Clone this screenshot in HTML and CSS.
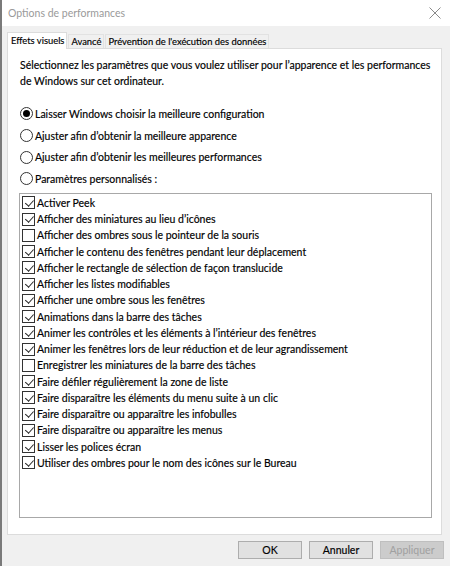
FILE: index.html
```html
<!DOCTYPE html>
<html lang="fr">
<head>
<meta charset="utf-8">
<title>Options de performances</title>
<link rel="stylesheet" href="styles.css">
</head>
<body>
<div class="window">
  <div class="titlebar">
    <span class="title">Options de performances</span>
    <svg class="close" width="12" height="12" viewBox="0 0 12 12"><path d="M0.5 0.5 L11.5 11.5 M11.5 0.5 L0.5 11.5" stroke="#8a8a8a" stroke-width="1" fill="none"/></svg>
  </div>
  <div class="tabs">
    <div class="tab active">Effets visuels</div>
    <div class="tab">Avancé</div>
    <div class="tab">Prévention de l'exécution des données</div>
  </div>
  <div class="panel">
    <p class="desc">Sélectionnez les paramètres que vous voulez utiliser pour l’apparence et les performances de Windows sur cet ordinateur.</p>
    <div class="radios">
      <div class="radio checked"><span class="dot"></span>Laisser Windows choisir la meilleure configuration</div>
      <div class="radio"><span class="dot"></span>Ajuster afin d’obtenir la meilleure apparence</div>
      <div class="radio"><span class="dot"></span>Ajuster afin d’obtenir les meilleures performances</div>
      <div class="radio"><span class="dot"></span>Paramètres personnalisés :</div>
    </div>
    <div class="list">
      <div class="item on"><span class="box"></span>Activer Peek</div>
      <div class="item on"><span class="box"></span>Afficher des miniatures au lieu d’icônes</div>
      <div class="item"><span class="box"></span>Afficher des ombres sous le pointeur de la souris</div>
      <div class="item on"><span class="box"></span>Afficher le contenu des fenêtres pendant leur déplacement</div>
      <div class="item on"><span class="box"></span>Afficher le rectangle de sélection de façon translucide</div>
      <div class="item on"><span class="box"></span>Afficher les listes modifiables</div>
      <div class="item on"><span class="box"></span>Afficher une ombre sous les fenêtres</div>
      <div class="item on"><span class="box"></span>Animations dans la barre des tâches</div>
      <div class="item on"><span class="box"></span>Animer les contrôles et les éléments à l’intérieur des fenêtres</div>
      <div class="item on"><span class="box"></span>Animer les fenêtres lors de leur réduction et de leur agrandissement</div>
      <div class="item"><span class="box"></span>Enregistrer les miniatures de la barre des tâches</div>
      <div class="item on"><span class="box"></span>Faire défiler régulièrement la zone de liste</div>
      <div class="item on"><span class="box"></span>Faire disparaître les éléments du menu suite à un clic</div>
      <div class="item on"><span class="box"></span>Faire disparaître ou apparaître les infobulles</div>
      <div class="item on"><span class="box"></span>Faire disparaître ou apparaître les menus</div>
      <div class="item on"><span class="box"></span>Lisser les polices écran</div>
      <div class="item on"><span class="box"></span>Utiliser des ombres pour le nom des icônes sur le Bureau</div>
    </div>
  </div>
  <div class="buttons">
    <button class="btn">OK</button>
    <button class="btn">Annuler</button>
    <button class="btn disabled">Appliquer</button>
  </div>
</div>
</body>
</html>
```
FILE: styles.css
```css
* { box-sizing: border-box; }
html, body { margin: 0; padding: 0; }
body {
  width: 450px;
  height: 566px;
  overflow: hidden;
  background: #f0f0f0;
  font-family: Lato, "Noto Sans", sans-serif;
  font-size: 10.5px;
  color: #000;
  -webkit-text-stroke: 0.15px #000;
}
.window {
  height: 566px;
  border-left: 2px solid #7a7a7a;
  display: flex;
  flex-direction: column;
}
.titlebar {
  height: 26px;
  background: #fff;
  display: flex;
  align-items: center;
  justify-content: space-between;
  padding: 0 9px 0 6px;
}
.title {
  color: #9a9a9a;
  font-size: 10.5px;
  -webkit-text-stroke: 0;
}
.tabs {
  display: flex;
  align-items: flex-end;
  margin: 6px 0 0 5px;
  height: 16px;
  position: relative;
  z-index: 1;
}
.tab {
  height: 14px;
  line-height: 13px;
  padding: 0 2px;
  margin-left: 1px;
  background: #f0f0f0;
  border: 1px solid #e2e2e2;
  border-bottom: none;
  white-space: nowrap;
  font-size: 9.4px;
}
.tab.active {
  height: 17px;
  line-height: 15px;
  background: #fff;
  border-color: #dcdcdc;
  margin-left: 0;
  margin-bottom: -1px;
  padding: 0 2px 0 3px;
}
.panel {
  margin: 0 8px 0 5px;
  height: 487px;
  background: #fff;
  border: 1px solid #dcdcdc;
  padding: 8px 8px 0 12px;
}
.desc {
  margin: 0;
  line-height: 16px;
}
.radios {
  margin-top: 14px;
}
.radio {
  height: 21.7px;
  display: flex;
  align-items: center;
  white-space: nowrap;
}
.radio .dot {
  width: 13px;
  height: 13px;
  border: 1px solid #333;
  border-radius: 50%;
  margin-right: 2px;
  display: flex;
  align-items: center;
  justify-content: center;
  flex: none;
}
.radio.checked .dot::after {
  content: "";
  width: 7px;
  height: 7px;
  border-radius: 50%;
  background: #000;
}
.list {
  margin-top: 3px;
  margin-left: -1px;
  width: 413px;
  height: 325px;
  border: 1px solid #a8a8a8;
  padding: 1px 0 0 2px;
}
.item {
  height: 16.25px;
  display: flex;
  align-items: center;
  white-space: nowrap;
}
.item .box {
  width: 13px;
  height: 13px;
  border: 1px solid #333;
  margin-right: 2px;
  flex: none;
  position: relative;
}
.item.on .box::after {
  content: "";
  position: absolute;
  left: 3.5px;
  top: 0.5px;
  width: 3.5px;
  height: 7px;
  border-right: 1px solid #222;
  border-bottom: 1px solid #222;
  transform: rotate(42deg);
}
.buttons {
  display: flex;
  justify-content: flex-end;
  gap: 7px;
  padding: 6px 6px 0 0;
}
.btn {
  width: 64px;
  height: 18px;
  padding: 0;
  background: #e1e1e1;
  border: 1px solid #adadad;
  font-family: inherit;
  font-size: 10.5px;
  color: #000;
  line-height: 16px;
  -webkit-text-stroke: 0.15px #000;
}
.btn.disabled {
  color: #a0a0a0;
  background: #cccccc;
  border-color: #bfbfbf;
  -webkit-text-stroke: 0;
}
```
